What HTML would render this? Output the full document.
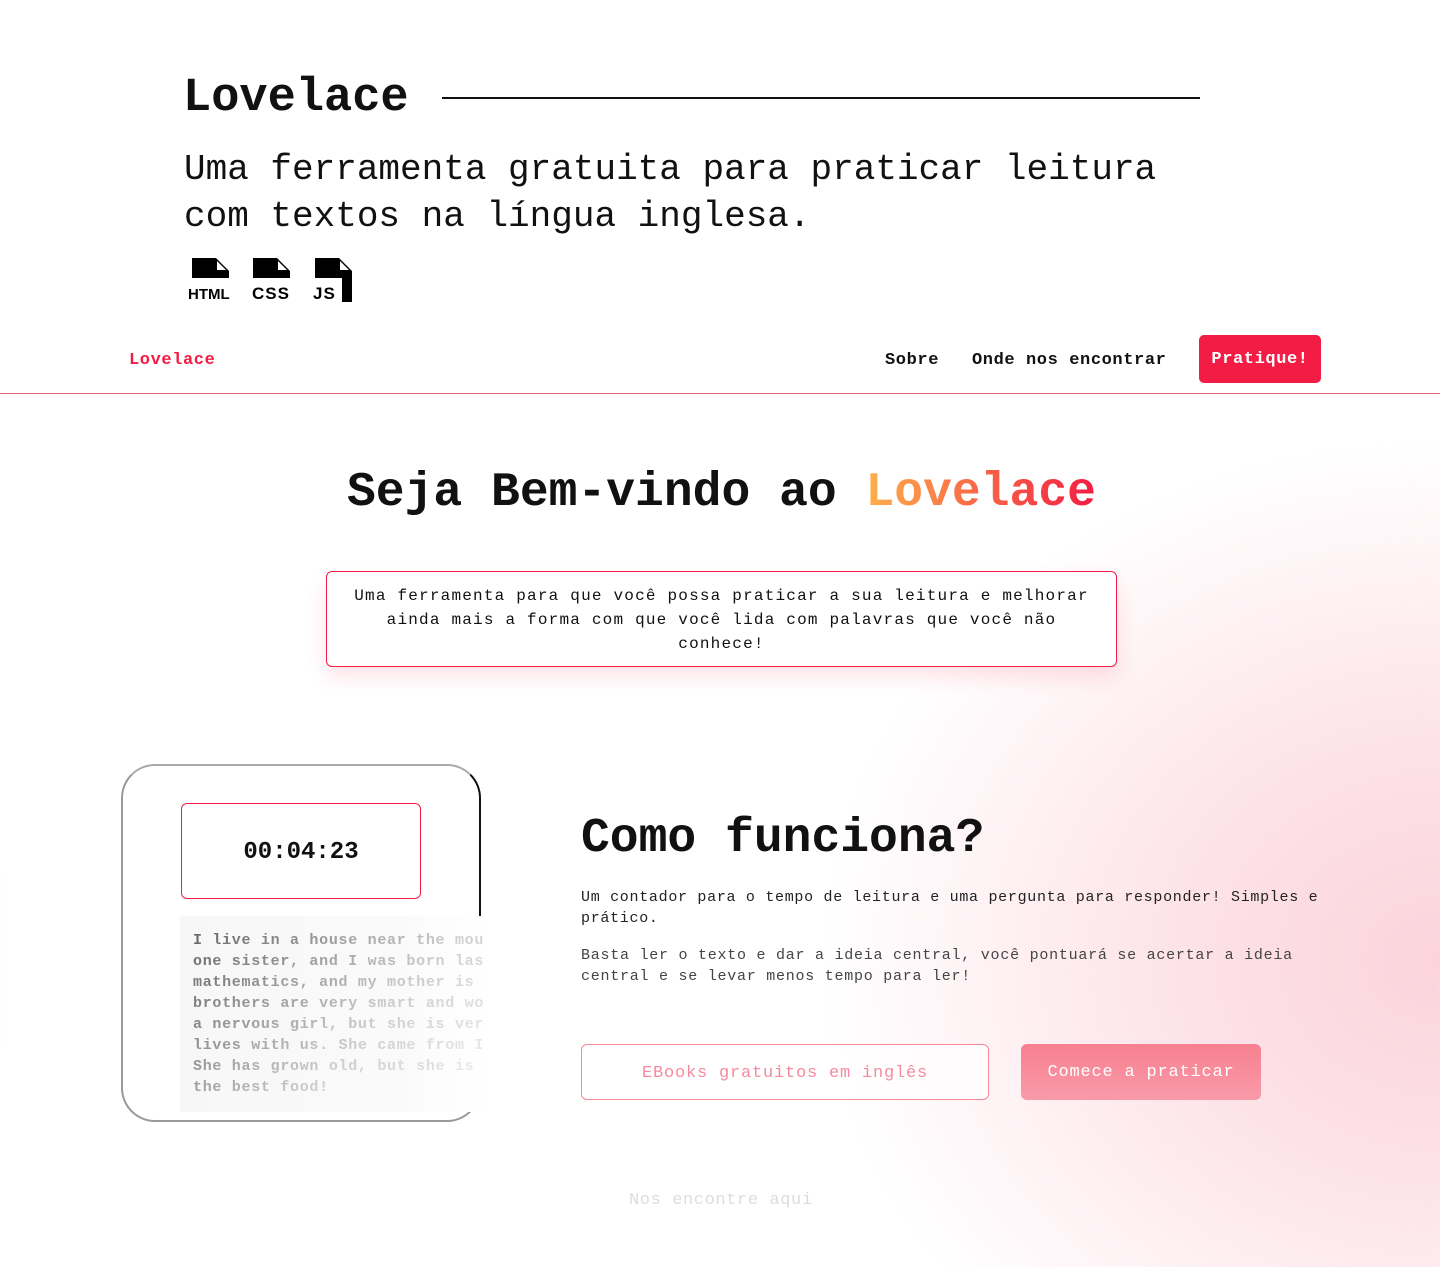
<!DOCTYPE html>
<html><head><meta charset="utf-8"><style>
*{margin:0;padding:0;box-sizing:border-box}
body{width:1440px;height:1267px;overflow:hidden;position:relative;font-family:"Liberation Mono","DejaVu Sans Mono",monospace;color:#111;
background:radial-gradient(ellipse 620px 520px at 1440px 960px,#fbd3db 0%,#fde4e9 45%,rgba(255,255,255,0) 100%),#fff;}
.a{position:absolute;white-space:nowrap}
</style></head><body>
<div class="a" style="left:183px;top:72px;font-size:47px;font-weight:bold;">Lovelace</div>
<div class="a" style="left:442px;top:97px;width:758px;height:2px;background:#111"></div>
<div class="a" style="left:184px;top:146px;font-size:36px;line-height:47px;white-space:normal;width:1000px">Uma ferramenta gratuita para praticar leitura com textos na língua inglesa.</div>
<svg class="a" style="left:186px;top:256px" width="170" height="48" viewBox="0 0 170 48">
<path d="M6 2h24l13 13v7H6z" fill="#000"/><path d="M31 5l9 9h-9z" fill="#fff"/>
<path d="M67 2h24l13 13v7H67z" fill="#000"/><path d="M92 5l9 9h-9z" fill="#fff"/>
<path d="M129 2h24l13 13v31h-10V22h-27z" fill="#000"/><path d="M154 5l9 9h-9z" fill="#fff"/>
<text x="2" y="43" font-family="Liberation Sans,sans-serif" font-weight="900" font-size="15" fill="#000">HTML</text>
<text x="66" y="43" font-family="Liberation Sans,sans-serif" font-weight="900" font-size="17" fill="#000" letter-spacing="1">CSS</text>
<text x="127" y="43" font-family="Liberation Sans,sans-serif" font-weight="900" font-size="17" fill="#000" letter-spacing="1">JS</text>
</svg>
<div class="a" style="left:129px;top:351px;font-size:17px;font-weight:bold;color:#f31c44;letter-spacing:0.6px">Lovelace</div>
<div class="a" style="left:885px;top:351px;font-size:17px;font-weight:bold;letter-spacing:0.6px">Sobre</div>
<div class="a" style="left:972px;top:351px;font-size:17px;font-weight:bold;letter-spacing:0.6px">Onde nos encontrar</div>
<div class="a" style="left:1199px;top:335px;width:122px;height:48px;background:#f31c44;border-radius:5px;color:#fff;font-size:17px;font-weight:bold;text-align:center;line-height:50px;letter-spacing:0.6px">Pratique!</div>
<div class="a" style="left:0;top:393px;width:1440px;height:1px;background:#e8667e"></div>
<div class="a" style="left:347px;top:466px;font-size:48px;font-weight:bold;">Seja Bem-vindo ao <span style="background:linear-gradient(90deg,#fdb04a,#f31c44);-webkit-background-clip:text;color:transparent">Lovelace</span></div>
<div class="a" style="left:326px;top:571px;width:791px;height:96px;border:1px solid #f31c44;border-radius:6px;box-shadow:0 10px 20px rgba(243,28,68,0.12);background:#fff;white-space:normal;text-align:center;font-size:16px;line-height:24px;letter-spacing:1.2px;padding:12px 26px 0">Uma ferramenta para que você possa praticar a sua leitura e melhorar ainda mais a forma com que você lida com palavras que você não conhece!</div>
<div class="a" style="left:121px;top:764px;width:360px;height:358px;border:2px solid #999;border-right-color:#111;border-top-color:#aaa;border-radius:34px;background:#fff"></div>
<div class="a" style="left:181px;top:803px;width:240px;height:96px;border:1px solid #f31c44;border-radius:6px;background:#fff;text-align:center;line-height:98px;font-size:24px;font-weight:bold">00:04:23</div>
<div class="a" style="left:180px;top:916px;width:310px;height:196px;background:linear-gradient(90deg,#f7f7f7,#fafafa 70%,#fff);"></div>
<div class="a" style="left:193px;top:930px;width:290px;overflow:hidden;font-size:15px;line-height:21px;letter-spacing:0.7px;font-weight:bold;-webkit-mask-image:linear-gradient(135deg,#000 0%,rgba(0,0,0,0.3) 60%,rgba(0,0,0,0.08) 100%);color:#666;white-space:pre">I live in a house near the mountains
one sister, and I was born last
mathematics, and my mother is a
brothers are very smart and work
a nervous girl, but she is very
lives with us. She came from It
She has grown old, but she is s
the best food!</div>
<div class="a" style="left:581px;top:812px;font-size:48px;font-weight:bold;">Como funciona?</div>
<div class="a" style="left:581px;top:887px;width:760px;white-space:normal;font-size:15px;line-height:21px;letter-spacing:0.7px;color:#222">Um contador para o tempo de leitura e uma pergunta para responder! Simples e prático.</div>
<div class="a" style="left:581px;top:945px;width:760px;white-space:normal;font-size:15px;line-height:21px;letter-spacing:0.75px;color:#444">Basta ler o texto e dar a ideia central, você pontuará se acertar a ideia central e se levar menos tempo para ler!</div>
<div class="a" style="left:581px;top:1044px;width:408px;height:56px;border:1px solid #f8889c;border-radius:6px;background:rgba(255,255,255,0.6);text-align:center;line-height:58px;font-size:17px;color:#f58aa0;letter-spacing:0.8px">EBooks gratuitos em inglês</div>
<div class="a" style="left:1021px;top:1044px;width:240px;height:56px;border-radius:6px;background:linear-gradient(#f7808f,#f89aaa);text-align:center;line-height:58px;font-size:17px;color:#fff;letter-spacing:0.8px">Comece a praticar</div>
<div class="a" style="left:629px;top:1191px;font-size:17px;color:#ddd;letter-spacing:0.6px">Nos encontre aqui</div>
<div class="a" style="left:633px;top:1227px;width:48px;height:48px;background:rgba(255,255,255,0.8);border-radius:6px"></div>
<div class="a" style="left:697px;top:1227px;width:48px;height:48px;background:rgba(255,255,255,0.8);border-radius:6px"></div>
<div class="a" style="left:762px;top:1227px;width:48px;height:48px;background:rgba(255,255,255,0.8);border-radius:6px"></div>
</body></html>
